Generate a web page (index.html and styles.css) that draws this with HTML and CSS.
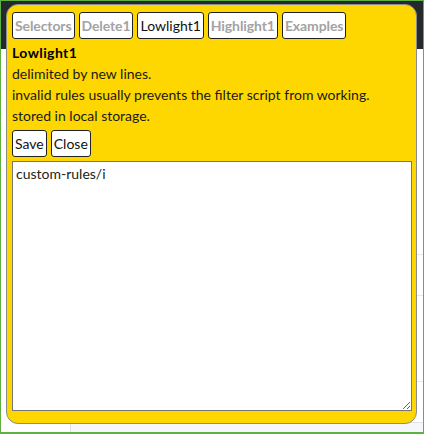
FILE: index.html
```html
<!DOCTYPE html>
<html>
<head>
<meta charset="utf-8">
<link rel="stylesheet" href="styles.css">
</head>
<body>
<div class="page">
  <div class="topbar"></div>
  <div class="content">
    <div class="side"></div>
    <div class="main">
      <div class="row r1"></div>
      <div class="row r2"></div>
      <div class="row r3"></div>
      <div class="foot"></div>
    </div>
  </div>
</div>
<div class="popup">
  <div class="tabs">
    <button class="btn off">Selectors</button>
    <button class="btn off">Delete1</button>
    <button class="btn">Lowlight1</button>
    <button class="btn off">Highlight1</button>
    <button class="btn off">Examples</button>
  </div>
  <div class="info">
    <div class="title">Lowlight1</div>
    <div>delimited by new lines.</div>
    <div>invalid rules usually prevents the filter script from working.</div>
    <div>stored in local storage.</div>
  </div>
  <div class="actions">
    <button class="btn">Save</button>
    <button class="btn">Close</button>
  </div>
  <textarea class="rules">custom-rules/i</textarea>
</div>
</body>
</html>
```
FILE: styles.css
```css
html, body {
  margin: 0;
  padding: 0;
  background: #ffffff;
  font-family: Lato, "Liberation Sans", sans-serif;
}
.page {
  height: 434px;
  box-sizing: border-box;
  border: 1px solid #5fb041;
  border-width: 1px 1px 2px 1px;
  display: flex;
  flex-direction: column;
  overflow: hidden;
}
.topbar {
  height: 48px;
  background: #24292e;
  flex: none;
}
.content {
  flex: 1;
  display: flex;
}
.side {
  width: 69px;
  border-right: 1px solid #dfe3e8;
}
.main {
  flex: 1;
  display: flex;
  flex-direction: column;
}
.row {
  border-bottom: 1px solid #e4e8ee;
}
.r1 { height: 205px; }
.r2 { height: 40px; }
.r3 { height: 85px; }
.foot {
  flex: 1;
  background: #f5f7fa;
  border-top: 1px solid #dde3ea;
  margin-top: 40px;
}
.popup {
  position: absolute;
  left: 6px;
  top: 4px;
  width: 411px;
  height: 420px;
  box-sizing: border-box;
  background: #ffd700;
  border: 1px solid #8c8c8c;
  border-radius: 12px;
  padding: 7px 4px 0 5px;
  display: flex;
  flex-direction: column;
  font-size: 14px;
  color: #1a1a1a;
}
.tabs, .actions {
  display: flex;
  gap: 4px;
}
.btn {
  height: 27px;
  box-sizing: border-box;
  margin: 0;
  padding: 0 2px;
  background: #ffffff;
  border: 1px solid #222222;
  border-radius: 3px;
  font-family: inherit;
  font-size: 14px;
  color: #111111;
}
.btn.off {
  color: #a3a3a3;
  font-weight: bold;
  letter-spacing: -0.1px;
}
.info {
  margin-top: 3px;
  line-height: 21px;
}
.title {
  font-weight: bold;
  color: #000000;
  letter-spacing: 0.4px;
}
.actions {
  margin-top: 4px;
}
.rules {
  margin-top: 4px;
  width: 400px;
  height: 250px;
  box-sizing: border-box;
  border: 1px solid #767676;
  padding: 3px 3px;
  font-family: inherit;
  font-size: 14px;
  color: #222222;
  resize: both;
}
```
